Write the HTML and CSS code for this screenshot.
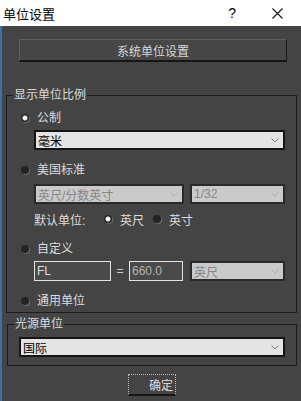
FILE: index.html
```html
<!DOCTYPE html>
<html lang="zh">
<head>
    <meta charset="UTF-8">
    <title>单位设置</title>
    <link rel="stylesheet" href="styles.css">
</head>
<body>
    <div class="titlebar">
        <span class="title">单位设置</span>
        <span class="help">?</span>
        <svg class="close" width="11" height="11" viewBox="0 0 11 11"><path d="M0.5 0.5 L10.5 10.5 M10.5 0.5 L0.5 10.5" stroke="#111" stroke-width="1.1" fill="none"/></svg>
    </div>

    <div class="dialog">
        <div class="sys-btn">系统单位设置</div>

        <!-- Display unit scale -->
        <fieldset class="group group-scale">
            <legend>显示单位比例</legend>

            <div class="radio-row row-metric"><span class="radio checked"></span>公制</div>
            <div class="select select-metric">
                <span>毫米</span>
                <svg class="chev" width="8" height="5" viewBox="0 0 8 5"><polyline points="0.5,0.5 4,4 7.5,0.5" stroke="#7a7a7a" fill="none"/></svg>
            </div>

            <div class="radio-row row-us"><span class="radio"></span>美国标准</div>
            <div class="indent pair-row">
                <div class="select disabled select-feet">
                    <span>英尺/分数英寸</span>
                    <svg class="chev" width="8" height="5" viewBox="0 0 8 5"><polyline points="0.5,0.5 4,4 7.5,0.5" stroke="#b0b0b0" fill="none"/></svg>
                </div>
                <div class="select disabled select-frac">
                    <span>1/32</span>
                    <svg class="chev" width="8" height="5" viewBox="0 0 8 5"><polyline points="0.5,0.5 4,4 7.5,0.5" stroke="#b0b0b0" fill="none"/></svg>
                </div>
            </div>
            <div class="indent default-row">
                <span class="default-label">默认单位:</span>
                <span class="radio checked"></span><span class="opt">英尺</span>
                <span class="radio"></span><span class="opt">英寸</span>
            </div>

            <div class="radio-row row-custom"><span class="radio"></span>自定义</div>
            <div class="indent custom-row">
                <div class="field field-name">FL</div>
                <span class="equals">=</span>
                <div class="field field-value">660.0</div>
                <div class="select disabled select-custom">
                    <span>英尺</span>
                    <svg class="chev" width="8" height="5" viewBox="0 0 8 5"><polyline points="0.5,0.5 4,4 7.5,0.5" stroke="#b0b0b0" fill="none"/></svg>
                </div>
            </div>

            <div class="radio-row row-generic"><span class="radio"></span>通用单位</div>
        </fieldset>

        <!-- Lighting units -->
        <fieldset class="group group-light">
            <legend>光源单位</legend>
            <div class="select select-light">
                <span>国际</span>
                <svg class="chev" width="8" height="5" viewBox="0 0 8 5"><polyline points="0.5,0.5 4,4 7.5,0.5" stroke="#7a7a7a" fill="none"/></svg>
            </div>
        </fieldset>

        <div class="ok-btn"><span>确定</span></div>
    </div>
</body>
</html>
```

FILE: styles.css
```css
body {
    margin: 0;
    padding: 0;
    width: 301px;
    height: 401px;
    overflow: hidden;
    background: #444444;
    font-family: "Liberation Sans", "Noto Sans CJK SC", sans-serif;
    font-size: 12px;
    color: #dcdcdc;
}

/* Title bar */
.titlebar {
    display: flex;
    align-items: center;
    height: 26px;
    background: #ffffff;
    color: #000;
}

.titlebar .title {
    font-size: 13px;
    margin-left: 3px;
    flex-grow: 1;
}

.titlebar .help {
    font-size: 14px;
    margin-right: 36px;
}

.titlebar .close {
    margin-right: 18px;
}

/* Dialog body */
.dialog {
    height: 375px;
    border-left: 2px solid #3471ad;
    box-sizing: border-box;
    overflow: hidden;
}

.sys-btn {
    margin: 13px 0 0 17px;
    width: 268px;
    height: 23px;
    box-sizing: border-box;
    border-top: 1px solid #5e5e5e;
    border-left: 1px solid #5e5e5e;
    border-right: 1px solid #1e1e1e;
    border-bottom: 2px solid #161616;
    background: #474747;
    display: flex;
    align-items: center;
    justify-content: center;
    font-size: 12px;
    color: #d8d8d8;
}

/* Group boxes */
.group {
    margin: 0;
    border: 1px solid #1c1c1c;
    box-sizing: border-box;
}

.group legend {
    font-size: 12px;
    line-height: 14px;
    height: 14px;
    padding: 0 1px;
}

.group-scale {
    margin: 26px 0 0 4px;
    width: 291px;
    padding: 0 11px 3px 14px;
}

.group-scale legend {
    margin-left: -8px;
}

.group-light {
    margin: 4px 0 0 5px;
    width: 290px;
    padding: 6px 11px 8px 11px;
}

.group-light legend {
    margin-left: -5px;
}

/* Radio buttons */
.radio-row {
    display: flex;
    align-items: center;
    height: 16px;
    line-height: 16px;
}

.radio {
    display: inline-block;
    width: 8px;
    height: 8px;
    border-radius: 50%;
    background: #232323;
    box-shadow: 1px 1px 0 #6a6a6a;
    margin-right: 8px;
    flex-shrink: 0;
}

.radio.checked {
    background: radial-gradient(circle, #ffffff 0, #f0f0f0 2px, #262626 3px);
}

.row-metric {
    margin-top: 8px;
}

.row-us {
    margin-top: 12px;
}

.row-custom {
    margin-top: 14px;
}

.row-generic {
    margin-top: 12px;
}

.indent {
    margin-left: 13px;
}

/* Dropdowns */
.select {
    display: flex;
    align-items: center;
    justify-content: space-between;
    height: 20px;
    box-sizing: border-box;
    border: 2px solid #141414;
    background: #e4e4e4;
    color: #000;
    padding: 0 4px 0 2px;
    font-size: 12px;
}

.select.disabled {
    border-color: #2a2a2a;
    background: #cacaca;
    color: #878787;
}

.select-metric {
    margin: 4px 0 0 13px;
    width: 251px;
}

.pair-row {
    display: flex;
    gap: 6px;
    margin-top: 6px;
}

.select-feet {
    width: 150px;
}

.select-frac {
    width: 95px;
}

.default-row {
    display: flex;
    align-items: center;
    height: 16px;
    margin-top: 7px;
}

.default-label {
    width: 70px;
}

.default-row .radio {
    margin-right: 8px;
}

.default-row .opt {
    margin-right: 9px;
}

/* Custom unit row */
.custom-row {
    display: flex;
    align-items: center;
    margin-top: 4px;
    height: 20px;
}

.field {
    height: 20px;
    box-sizing: border-box;
    border: 1px solid #e2e2e2;
    background: #4a4a4a;
    padding: 0 2px;
    line-height: 18px;
    font-size: 12px;
}

.field-name {
    width: 77px;
    color: #dcdcdc;
}

.field-value {
    width: 54px;
    color: #b4b4b4;
}

.equals {
    width: 18px;
    text-align: center;
    color: #cfcfcf;
}

.select-custom {
    width: 95px;
    margin-left: 7px;
}

.select-light {
    width: 266px;
}

/* OK button */
.ok-btn {
    margin: 8px 0 0 126px;
    width: 48px;
    height: 22px;
    box-sizing: border-box;
    border: 1px dotted #bdbdbd;
    border-bottom: 2px solid #161616;
    display: flex;
    align-items: center;
    justify-content: flex-end;
    padding-right: 2px;
    font-size: 12px;
    color: #dcdcdc;
}
```
